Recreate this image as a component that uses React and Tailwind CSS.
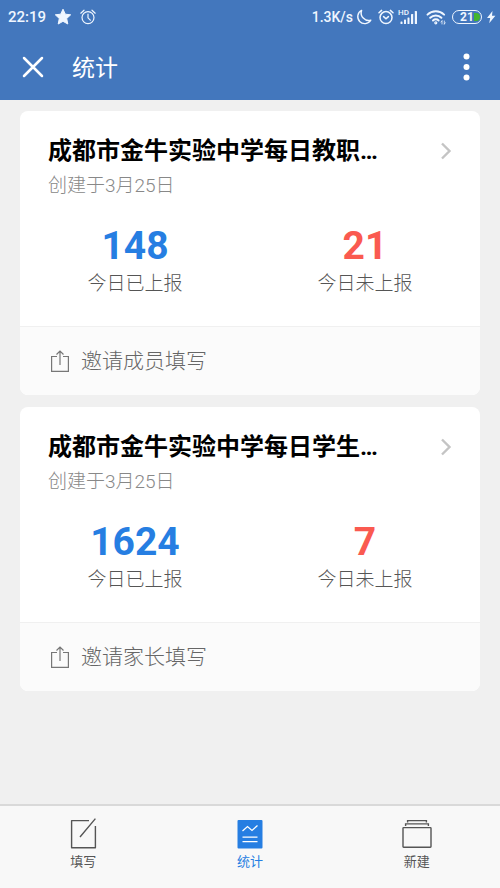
import { useState } from "react";

const cards = [
  {
    id: "staff",
    title: "成都市金牛实验中学每日教职…",
    date: "创建于3月25日",
    reported: 148,
    missing: 21,
    invite: "邀请成员填写",
  },
  {
    id: "student",
    title: "成都市金牛实验中学每日学生…",
    date: "创建于3月25日",
    reported: 1624,
    missing: 7,
    invite: "邀请家长填写",
  },
];

function AlarmLeft() {
  return (
    <svg className="h-4 w-4" viewBox="0 0 16 16" fill="none" stroke="currentColor" strokeWidth="1.2" strokeLinecap="round">
      <circle cx="8" cy="8.6" r="6" />
      <path d="M8 5v3.8l2.3 2.4M.8 4.2 4 1.2M15.2 4.2 12 1.2" />
    </svg>
  );
}

function StatusBar() {
  return (
    <div className="flex h-[34px] items-center justify-between pr-1 pl-2 text-[15px] font-medium text-blue-50">
      <div className="flex items-center">
        <span>22:19</span>
        <svg className="ml-2 h-[18px] w-[18px]" viewBox="0 0 18 18" fill="currentColor" stroke="currentColor" strokeWidth="1" strokeLinejoin="round">
          <path d="m9 1.2 2.3 5 5.4.6-4 3.7 1.1 5.5L9 13.3 4.2 16l1.1-5.5-4-3.7 5.4-.6z" />
        </svg>
        <span className="ml-2">
          <AlarmLeft />
        </span>
      </div>
      <div className="flex items-center">
        <span className="text-[14px]">1.3K/s</span>
        <svg className="ml-[3px] h-4 w-4" viewBox="0 0 16 16" fill="none" stroke="currentColor" strokeWidth="1.4" strokeLinejoin="round">
          <path d="M5.6 1.4A7 7 0 1 0 14.8 11.2 7.6 7.6 0 0 1 5.6 1.4z" />
        </svg>
        <svg className="ml-1.5 h-4 w-4" viewBox="0 0 16 16" fill="none" stroke="currentColor" strokeWidth="1.5" strokeLinecap="round">
          <circle cx="8" cy="8.6" r="6" />
          <path d="m5.6 7.6 2.4 2.2 2.4-2.2M1 3.8 3.6 1.4M15 3.8l-2.6-2.4" />
        </svg>
        <div className="relative ml-1 h-4 w-5">
          <span className="absolute top-0 left-0 text-[8px] leading-[8px]">HD</span>
          <svg className="h-4 w-5" viewBox="0 0 20 16" fill="currentColor">
            <rect x="2.5" y="12.5" width="2" height="2.5" rx=".6" />
            <rect x="6" y="10.5" width="2" height="4.5" rx=".6" />
            <rect x="9.5" y="8.5" width="2" height="6.5" rx=".6" />
            <rect x="13" y="5" width="2.2" height="10" rx=".6" />
            <rect x="16.8" y="2" width="2.2" height="13" rx=".6" />
          </svg>
        </div>
        <svg className="ml-2 h-4 w-5" viewBox="0 0 20 16" fill="none" stroke="currentColor" strokeWidth="2" strokeLinecap="round">
          <path d="M1.5 5.6a12 12 0 0 1 16.6 0M4.2 8.7a8 8 0 0 1 11.2 0M7 11.5a4 4 0 0 1 5.6 0" />
          <circle cx="9.8" cy="13.8" r=".6" />
          <path d="M16 12v3m-1-2 1-1.2M18.3 12v3m1-1.2-1 1.2" strokeWidth=".8" />
        </svg>
        <div className="relative ml-1.5 flex h-[14px] w-[30px] items-center justify-center rounded-full border border-blue-50">
          <svg className="absolute right-px h-2 w-[6px]" viewBox="0 0 6 8">
            <path d="M0 0h2a4 4 0 0 1 0 8H0z" fill="#45b52c" />
          </svg>
          <span className="relative text-[12px] leading-none font-bold">21</span>
        </div>
        <svg className="ml-1 h-[14px] w-[10px]" viewBox="0 0 10 14" fill="currentColor">
          <path d="M6.5 1 1 8h3.2L3.2 13.2 9.4 5.8H6z" />
        </svg>
      </div>
    </div>
  );
}

function ReportCard({ card }) {
  return (
    <section className="overflow-hidden rounded-lg bg-white">
      <div className="px-7 pt-6 pb-7">
        <a href={`#${card.id}`} className="flex items-center justify-between">
          <h2 className="text-[24px] leading-8 font-bold text-black">{card.title}</h2>
          <svg className="h-[18px] w-3" viewBox="0 0 12 18" fill="none" stroke="#c4c4c4" strokeWidth="2.4">
            <path d="m2 1.5 7.5 7.5L2 16.5" />
          </svg>
        </a>
        <p className="mt-[5px] text-[19px] leading-7 font-light text-[#888888]">{card.date}</p>
        <div className="-mx-7 mt-[26px] grid grid-cols-2 text-center">
          <div>
            <div className="text-[39px] leading-10 font-bold text-[#267ee2]">{card.reported}</div>
            <div className="mt-1 text-[19px] leading-7 font-light text-[#555555]">今日已上报</div>
          </div>
          <div>
            <div className="text-[39px] leading-10 font-bold text-[#fa5a50]">{card.missing}</div>
            <div className="mt-1 text-[19px] leading-7 font-light text-[#555555]">今日未上报</div>
          </div>
        </div>
      </div>
      <button className="flex w-full items-center border-t border-[#f0f0f0] bg-[#fbfbfb] px-[31px] py-5 text-[21px] leading-7 font-light text-[#666666]">
        <svg className="mr-3 h-[22px] w-[18px]" viewBox="0 0 18 22" fill="none" stroke="#777777" strokeWidth="1.2">
          <path d="M6 6.5H.6v14.9h16.8V6.5H12M9 15V1M5.5 4.5 9 1l3.5 3.5" />
        </svg>
        {card.invite}
      </button>
    </section>
  );
}

function FillIcon() {
  return (
    <svg className="h-8 w-8" viewBox="0 0 32 32" fill="none" stroke="#555555" strokeWidth="1.4">
      <path d="M22 3.6H4.6v27.2h23.8V9M13 20 28.4 1.6" strokeLinejoin="round" />
    </svg>
  );
}

function StatsIcon() {
  return (
    <svg className="h-8 w-8" viewBox="0 0 32 32" fill="none" stroke="white" strokeWidth="1.3">
      <rect x="3.5" y="3" width="25" height="28.5" rx="1" fill="#267ee2" stroke="none" />
      <path d="m8.5 14 5-4.5 4.5 4 5.5-5M8.5 20.2h15M8.5 24.6h15" />
    </svg>
  );
}

function NewIcon() {
  return (
    <svg className="h-8 w-8" viewBox="0 0 32 32" fill="none" stroke="#555555" strokeWidth="1.4">
      <rect x="2" y="10.6" width="28" height="19.6" rx=".6" />
      <path d="M4.6 9V6.9h22.8V9M6.6 5.6V3.6h18.8v2" />
    </svg>
  );
}

const tabs = [
  { id: "fill", label: "填写", Icon: FillIcon },
  { id: "stats", label: "统计", Icon: StatsIcon },
  { id: "new", label: "新建", Icon: NewIcon },
];

function App() {
  const [tab, setTab] = useState("stats");

  return (
    <div lang="zh-CN" className="flex min-h-screen flex-col bg-[#f0f0f0] font-[Roboto,'Noto_Sans_CJK_SC',sans-serif]">
      <header className="bg-[#4377bd] text-white">
        <StatusBar />
        <div className="flex h-[66px] items-center px-[22px]">
          <button aria-label="关闭">
            <svg className="h-[22px] w-[22px]" viewBox="0 0 22 22" fill="none" stroke="currentColor" strokeWidth="2.5" strokeLinecap="round">
              <path d="m2 2 18 18M20 2 2 20" />
            </svg>
          </button>
          <h1 className="pt-1 pl-7 text-[23px] leading-8">统计</h1>
          <button aria-label="更多" className="ml-auto">
            <svg className="h-7 w-6" viewBox="0 0 24 28" fill="currentColor">
              <circle cx="12.5" cy="3.5" r="3" />
              <circle cx="12.5" cy="14" r="3" />
              <circle cx="12.5" cy="24.5" r="3" />
            </svg>
          </button>
        </div>
      </header>

      <main className="flex flex-1 flex-col gap-3 px-5 py-[11px]">
        {cards.map((card) => (
          <ReportCard key={card.id} card={card} />
        ))}
      </main>

      <nav className="grid grid-cols-3 border-t-2 border-[#d9d9d9] bg-[#f8f8f8] pt-[11px] pb-4">
        {tabs.map(({ id, label, Icon }) => (
          <button
            key={id}
            onClick={() => setTab(id)}
            className={`flex flex-col items-center gap-[3px] text-[13px] leading-5 ${tab === id ? "text-[#267ee2]" : "text-[#555555]"}`}
          >
            <Icon />
            {label}
          </button>
        ))}
      </nav>
    </div>
  );
}

export default App;
